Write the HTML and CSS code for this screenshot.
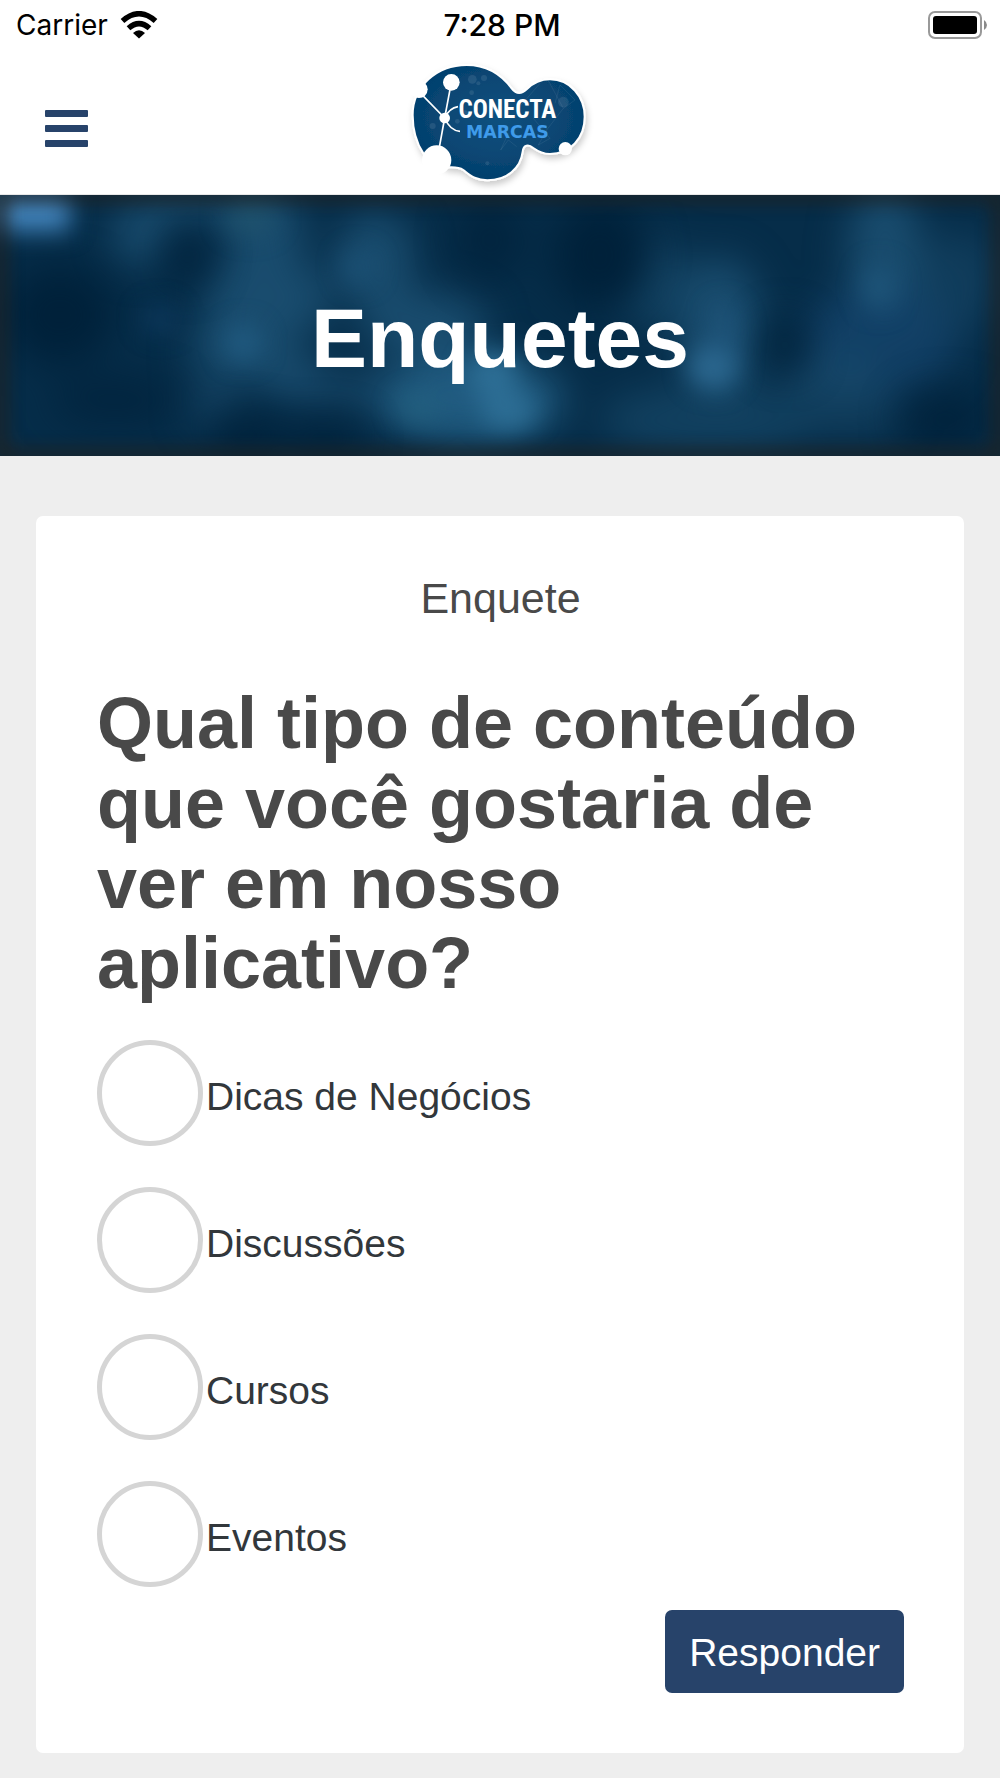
FILE: index.html
```html
<!DOCTYPE html>
<html lang="pt-BR">
<head>
<meta charset="utf-8">
<meta name="viewport" content="width=device-width, initial-scale=1">
<title>Enquetes</title>
<link rel="stylesheet" href="styles.css">
</head>
<body>
<div class="status">
  <div class="status-left">
    <span>Carrier</span>
    <svg class="wifi" width="38" height="28" viewBox="0 0 38 28" aria-hidden="true">
      <g fill="none" stroke="#000" stroke-width="5.500">
        <path d="M2.500 10Q19-4.500 35.500 10"/>
        <path d="M8.500 17.300Q19 8 29.500 17.300"/>
      </g>
      <path d="M13 22Q19 16.500 25 22L19 27.500Z"/>
    </svg>
  </div>
  <span class="time">7:28 PM</span>
  <svg class="battery" width="60" height="28" viewBox="0 0 60 28" aria-hidden="true">
    <rect x="1" y="1" width="52" height="26" rx="6" fill="#fff" stroke="#999" stroke-width="2"/>
    <rect x="5" y="5" width="44" height="18" rx="3"/>
    <path d="M56 9Q59 11 59 14Q59 17 56 19Z" fill="#8a8a8a"/>
  </svg>
</div>
<header class="header">
  <button class="menu" type="button" aria-label="Menu">
    <svg width="43" height="37" viewBox="0 0 43 37" fill="#27436a">
      <rect width="43" height="7" rx="1"/><rect y="15" width="43" height="7" rx="1"/><rect y="30" width="43" height="7" rx="1"/>
    </svg>
  </button>
  <svg class="logo" width="200" height="144" viewBox="0 0 600 432" role="img" aria-label="Conecta Marcas">
    <defs>
      <radialGradient id="sea" cx=".5" cy=".45" r=".6"><stop offset="0" stop-color="#11517f"/><stop offset="1" stop-color="#023e6b"/></radialGradient>
      <filter id="shade" x="-10%" y="-10%" width="125%" height="130%"><feDropShadow dx="5" dy="12" stdDeviation="9" flood-color="#000" flood-opacity=".2"/></filter>
    </defs>
    <g filter="url(#shade)">
      <path fill="url(#sea)" stroke="#fff" stroke-width="6" d="M38 195C38 110 110 45 200 45C265 45 305 75 335 115C350 135 365 132 380 118C400 98 420 88 450 88C510 88 554 140 554 200C554 265 510 312 450 312C430 312 415 305 400 294C385 282 370 285 368 305C362 355 320 391 262 391C225 391 210 375 190 360C175 350 160 352 145 352L70 310C50 280 38 240 38 195Z"/>
    </g>
    <circle cx="110" cy="330" r="44" fill="#fff"/>
    <g fill="#fff" opacity=".09">
      <circle cx="217" cy="88" r="13"/><circle cx="252" cy="84" r="9"/><circle cx="195" cy="190" r="9"/><circle cx="98" cy="228" r="9"/><circle cx="215" cy="128" r="7"/><circle cx="490" cy="156" r="16"/><circle cx="172" cy="214" r="7"/><circle cx="262" cy="340" r="6"/><circle cx="235" cy="100" r="6"/>
    </g>
    <g fill="none" stroke="#fff" stroke-width="1" opacity=".22">
      <path d="M420 100L355 175M445 92L490 175L525 150L480 105L465 160M490 175L440 240L415 285L450 265L400 205M325 250L302 300L325 270L350 290"/>
    </g>
    <path d="M57 125L134 204L154 97M134 204L112 325M134 204Q148 174 174 170M134 204Q150 242 180 244" fill="none" stroke="#fff" stroke-width="5"/>
    <g fill="#fff"><circle cx="154" cy="97" r="25"/><circle cx="134" cy="204" r="16"/><circle cx="57" cy="118" r="26"/><circle cx="496" cy="296" r="20"/></g>
    <text class="logo-top" x="322" y="203" text-anchor="middle">CONECTA</text>
    <text class="logo-sub" x="322" y="265" text-anchor="middle">MARCAS</text>
  </svg>
</header>
<section class="banner">
  <svg class="banner-art" viewBox="0 0 1000 261" preserveAspectRatio="none" color-interpolation-filters="sRGB" aria-hidden="true">
    <defs>
      <filter id="b1" x="-20%" y="-60%" width="140%" height="220%"><feGaussianBlur stdDeviation="19"/></filter>
      <filter id="b2" x="-20%" y="-60%" width="140%" height="220%"><feGaussianBlur stdDeviation="12"/></filter>
      <filter id="b3" x="-10%" y="-10%" width="120%" height="120%"><feGaussianBlur stdDeviation="9"/></filter>
    </defs>
    <rect width="1000" height="261" fill="#062d49"/>
    <g filter="url(#b1)" fill="#194c6e">
      <ellipse cx="140" cy="38" rx="28" ry="32"/>
      <ellipse cx="190" cy="12" rx="60" ry="16"/>
      <ellipse cx="265" cy="40" rx="40" ry="50"/>
      <ellipse cx="235" cy="115" rx="32" ry="50"/>
      <ellipse cx="240" cy="155" rx="52" ry="28"/>
      <ellipse cx="290" cy="105" rx="42" ry="38"/>
      <ellipse cx="375" cy="65" rx="40" ry="50"/>
      <ellipse cx="290" cy="180" rx="34" ry="24"/>
      <ellipse cx="425" cy="130" rx="64" ry="34"/>
      <ellipse cx="350" cy="195" rx="70" ry="19" opacity=".7"/>
      <ellipse cx="470" cy="205" rx="94" ry="44" fill="#205b80"/>
      <ellipse cx="655" cy="90" rx="40" ry="44" opacity=".6"/>
      <ellipse cx="720" cy="130" rx="42" ry="68"/>
      <ellipse cx="710" cy="225" rx="110" ry="36" opacity=".6"/>
      <ellipse cx="885" cy="60" rx="38" ry="74"/>
      <ellipse cx="880" cy="145" rx="78" ry="54" fill="#14446b" opacity=".8"/>
      <ellipse cx="960" cy="85" rx="40" ry="50" opacity=".5"/>
      <ellipse cx="830" cy="180" rx="50" ry="24" opacity=".7"/>
      <ellipse cx="215" cy="210" rx="26" ry="24" opacity=".7"/>
      <ellipse cx="855" cy="218" rx="50" ry="24" opacity=".5"/>
    </g>
    <g filter="url(#b1)" fill="#00213a">
      <ellipse cx="600" cy="60" rx="48" ry="54"/>
      <ellipse cx="490" cy="45" rx="34" ry="42" opacity=".7"/>
      <ellipse cx="60" cy="120" rx="54" ry="50"/>
      <ellipse cx="115" cy="205" rx="64" ry="24" opacity=".7"/>
      <ellipse cx="245" cy="240" rx="40" ry="20"/>
      <ellipse cx="325" cy="243" rx="38" ry="16"/>
      <ellipse cx="785" cy="150" rx="22" ry="26" opacity=".9"/>
      <ellipse cx="945" cy="225" rx="46" ry="30" opacity=".8"/>
      <ellipse cx="188" cy="60" rx="22" ry="28" opacity=".8"/>
    </g>
    <g filter="url(#b2)">
      <rect x="-6" y="-4" width="76" height="40" fill="#4284bc"/>
      <ellipse cx="243" cy="148" rx="18" ry="18" fill="#205a80"/>
      <ellipse cx="358" cy="72" rx="16" ry="16" fill="#1b5074"/>
      <ellipse cx="250" cy="22" rx="26" ry="18" fill="#21546e" opacity=".8"/>
      <ellipse cx="492" cy="180" rx="26" ry="22" fill="#2d6e95"/>
      <ellipse cx="508" cy="216" rx="28" ry="18" fill="#2d6e95"/>
      <ellipse cx="418" cy="213" rx="22" ry="15" fill="#24617f" opacity=".7"/>
      <ellipse cx="713" cy="172" rx="25" ry="22" fill="#2b678f"/>
      <ellipse cx="725" cy="135" rx="16" ry="26" fill="#20567c" opacity=".7"/>
      <ellipse cx="879" cy="92" rx="16" ry="22" fill="#1e5579"/>
      <ellipse cx="160" cy="124" rx="18" ry="14" fill="#0f3b60" opacity=".8"/>
    </g>
    <rect width="1000" height="261" fill="none" stroke="#26201a" stroke-width="12" opacity=".85" filter="url(#b3)"/>
  </svg>
  <h1>Enquetes</h1>
</section>
<main class="content">
  <form class="card">
    <p class="kind">Enquete</p>
    <fieldset class="poll">
      <legend>Qual tipo de conteúdo que você gostaria de ver em nosso aplicativo?</legend>
      <div class="options">
        <label class="option"><input type="radio" name="conteudo" value="dicas"><span>Dicas de Negócios</span></label>
        <label class="option"><input type="radio" name="conteudo" value="discussoes"><span>Discussões</span></label>
        <label class="option"><input type="radio" name="conteudo" value="cursos"><span>Cursos</span></label>
        <label class="option"><input type="radio" name="conteudo" value="eventos"><span>Eventos</span></label>
      </div>
    </fieldset>
    <button class="submit" type="button">Responder</button>
  </form>
</main>
</body>
</html>
```
FILE: styles.css
```css
* {
  box-sizing: border-box;
}

body {
  margin: 0;
  min-height: 100vh;
  background: #eee;
  color: #494949;
  font-family: "Liberation Sans", Arial, sans-serif;
}

.status {
  display: grid;
  grid-template-columns: 1fr auto 1fr;
  align-items: center;
  height: 50px;
  padding: 0 12px 0 16px;
  background: #fff;
  color: #000;
  font: 28px/32px Inter, "Liberation Sans", sans-serif;
}

.status-left {
  display: flex;
  align-items: center;
  gap: 12px;
}

.time {
  font-size: 30px;
  font-weight: 500;
}

.battery {
  justify-self: end;
}

.header {
  display: grid;
  grid-template-columns: 1fr auto 1fr;
  align-items: center;
  padding: 0 45px;
  background: #fff;
  border-bottom: 1px solid #e8e8e8;
}

.menu {
  justify-self: start;
  display: flex;
  padding: 24px 0 12px;
  border: 0;
  background: none;
}

.logo {
  display: block;
}

.logo-top {
  fill: #fff;
  font: bold 75px "Roboto Condensed", "Liberation Sans Narrow", "Liberation Sans", sans-serif;
}

.logo-sub {
  fill: #3f9bea;
  font: bold 52px "DejaVu Sans", sans-serif;
}

.banner {
  display: grid;
  overflow: hidden;
}

.banner > * {
  grid-area: 1 / 1;
}

.banner-art {
  width: 100%;
  height: 100%;
  min-height: 0;
  contain: size;
}

.banner h1 {
  z-index: 1;
  margin: 0;
  padding: 95px 16px 70px;
  color: #fff;
  font-size: 84px;
  line-height: 96px;
  text-align: center;
}

.content {
  padding: 60px 36px 24px;
}

.card {
  display: flex;
  flex-direction: column;
  padding: 60px 60px 60px 61px;
  border-radius: 7px;
  background: #fff;
}

.kind {
  margin: 0 0 63px;
  font-size: 43px;
  line-height: 44px;
  text-align: center;
}

.poll {
  min-width: 0;
  margin: 0;
  padding: 0;
  border: 0;
}

.poll legend {
  padding: 0;
  font-size: 72px;
  font-weight: bold;
  line-height: 80px;
}

.options {
  display: grid;
  gap: 41px;
  padding-top: 37px;
}

.option {
  display: flex;
  align-items: center;
  gap: 3px;
  color: #32373b;
  font-size: 39px;
  line-height: 48px;
}

.option span {
  padding-top: 8px;
}

.option input {
  appearance: none;
  flex: none;
  width: 106px;
  height: 106px;
  margin: 0;
  border: 5px solid #d5d5d5;
  border-radius: 50%;
  background: #fff;
}

.option input:checked {
  background: radial-gradient(#27436a 0 50%, #fff 52%);
}

.submit {
  align-self: flex-end;
  margin-top: 23px;
  padding: 19px 24px 16px;
  border: 0;
  border-radius: 7px;
  background: #27436a;
  color: #fff;
  font: 39px/48px "Liberation Sans", Arial, sans-serif;
}
```
